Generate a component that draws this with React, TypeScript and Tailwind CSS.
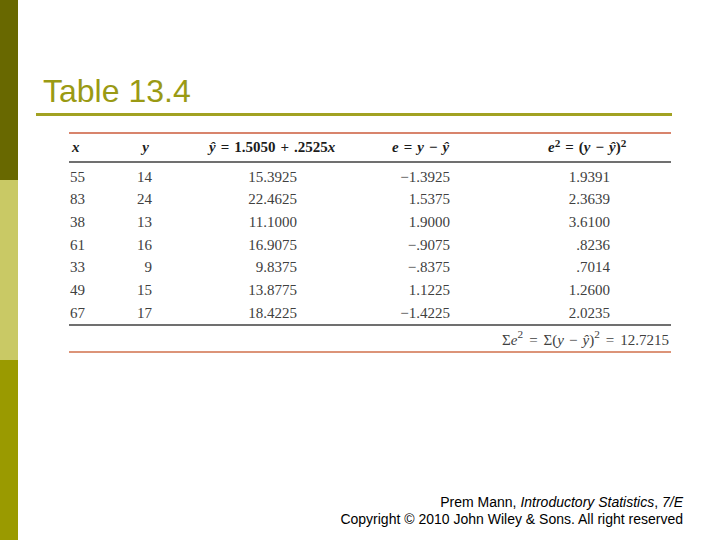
import React from "react";

const rows = [
  ["55", "14", "15.3925", "\u22121.3925", "1.9391"],
  ["83", "24", "22.4625", "1.5375", "2.3639"],
  ["38", "13", "11.1000", "1.9000", "3.6100"],
  ["61", "16", "16.9075", "\u2212.9075", ".8236"],
  ["33", "9", "9.8375", "\u2212.8375", ".7014"],
  ["49", "15", "13.8775", "1.1225", "1.2600"],
  ["67", "17", "18.4225", "\u22121.4225", "2.0235"],
];

export default function App() {
  return (
    <div className="flex h-[540px] w-[720px] overflow-hidden bg-white">
      <div className="flex w-[18px] flex-col">
        <div className="h-[180px] bg-[#686800]" />
        <div className="h-[180px] bg-[#c9c965]" />
        <div className="h-[180px] bg-[#9a9a00]" />
      </div>
      <div className="flex flex-1 flex-col">
        <div
          className="ml-[25px] mt-[73px] h-[36px] text-[32px] leading-[36px] text-[#9a9a14]"
          style={{ fontFamily: '"Liberation Sans", Arial, sans-serif' }}
        >
          Table 13.4
        </div>
        <div className="ml-[18px] mt-[4px] h-[3px] w-[636px] bg-[#a2a222]" />
        <div
          className="ml-[51px] mt-[16px] w-[602px] text-[15px] text-[#404040]"
          style={{ fontFamily: '"Liberation Serif", "Times New Roman", serif' }}
        >
          <div className="h-[2px] bg-[#d8846c]" />
          <div className="grid h-[27px] grid-cols-[51px_32px_188px_140px_191px] items-center font-bold text-[#1c1c1c]">
            <div className="pl-[3px] italic">x</div>
            <div className="pr-[3px] text-right italic">y</div>
            <div className="whitespace-nowrap pl-[57px]">
              <span className="italic">ŷ</span>
              <span className="mx-[5px]">=</span>1.5050<span className="mx-[5px]">+</span>.2525<span className="italic">x</span>
            </div>
            <div className="whitespace-nowrap pl-[52px]">
              <span className="italic">e</span>
              <span className="mx-[5px]">=</span>
              <span className="italic">y</span>
              <span className="mx-[5px]">{"\u2212"}</span>
              <span className="italic">ŷ</span>
            </div>
            <div className="whitespace-nowrap pl-[68px]">
              <span className="italic">e</span>
              <sup>2</sup>
              <span className="mx-[5px]">=</span>(<span className="italic">y</span>
              <span className="mx-[5px]">{"\u2212"}</span>
              <span className="italic">ŷ</span>)<sup>2</sup>
            </div>
          </div>
          <div className="h-[1.5px] bg-[#707070]" />
          <div className="pt-[3px]">
            {rows.map((r, i) => (
              <div
                key={i}
                className="grid h-[22.67px] grid-cols-[51px_32px_188px_140px_191px] items-center"
              >
                <div className="pl-[1px]">{r[0]}</div>
                <div className="text-right">{r[1]}</div>
                <div className="pr-[43px] text-right">{r[2]}</div>
                <div className="pr-[30px] text-right">{r[3]}</div>
                <div className="pr-[61px] text-right">{r[4]}</div>
              </div>
            ))}
          </div>
          <div className="h-[1.5px] bg-[#707070]" />
          <div className="flex h-[25px] items-center justify-end whitespace-nowrap pr-[2px] pt-[4px]">
            Σ<span className="italic">e</span>
            <sup>2</sup>
            <span className="mx-[6px]">=</span>Σ(<span className="italic">y</span>
            <span className="mx-[5px]">{"\u2212"}</span>
            <span className="italic">ŷ</span>)<sup>2</sup>
            <span className="mx-[6px]">=</span>12.7215
          </div>
          <div className="h-[2px] bg-[#dc9478]" />
        </div>
        <div
          className="mt-auto pb-[12px] pr-[37px] text-right text-[14px] leading-[17px] text-black"
          style={{ fontFamily: '"Liberation Sans", Arial, sans-serif' }}
        >
          <div>
            Prem Mann, <span className="italic">Introductory Statistics</span>, <span className="italic">7/E</span>
          </div>
          <div>Copyright © 2010 John Wiley &amp; Sons. All right reserved</div>
        </div>
      </div>
    </div>
  );
}
